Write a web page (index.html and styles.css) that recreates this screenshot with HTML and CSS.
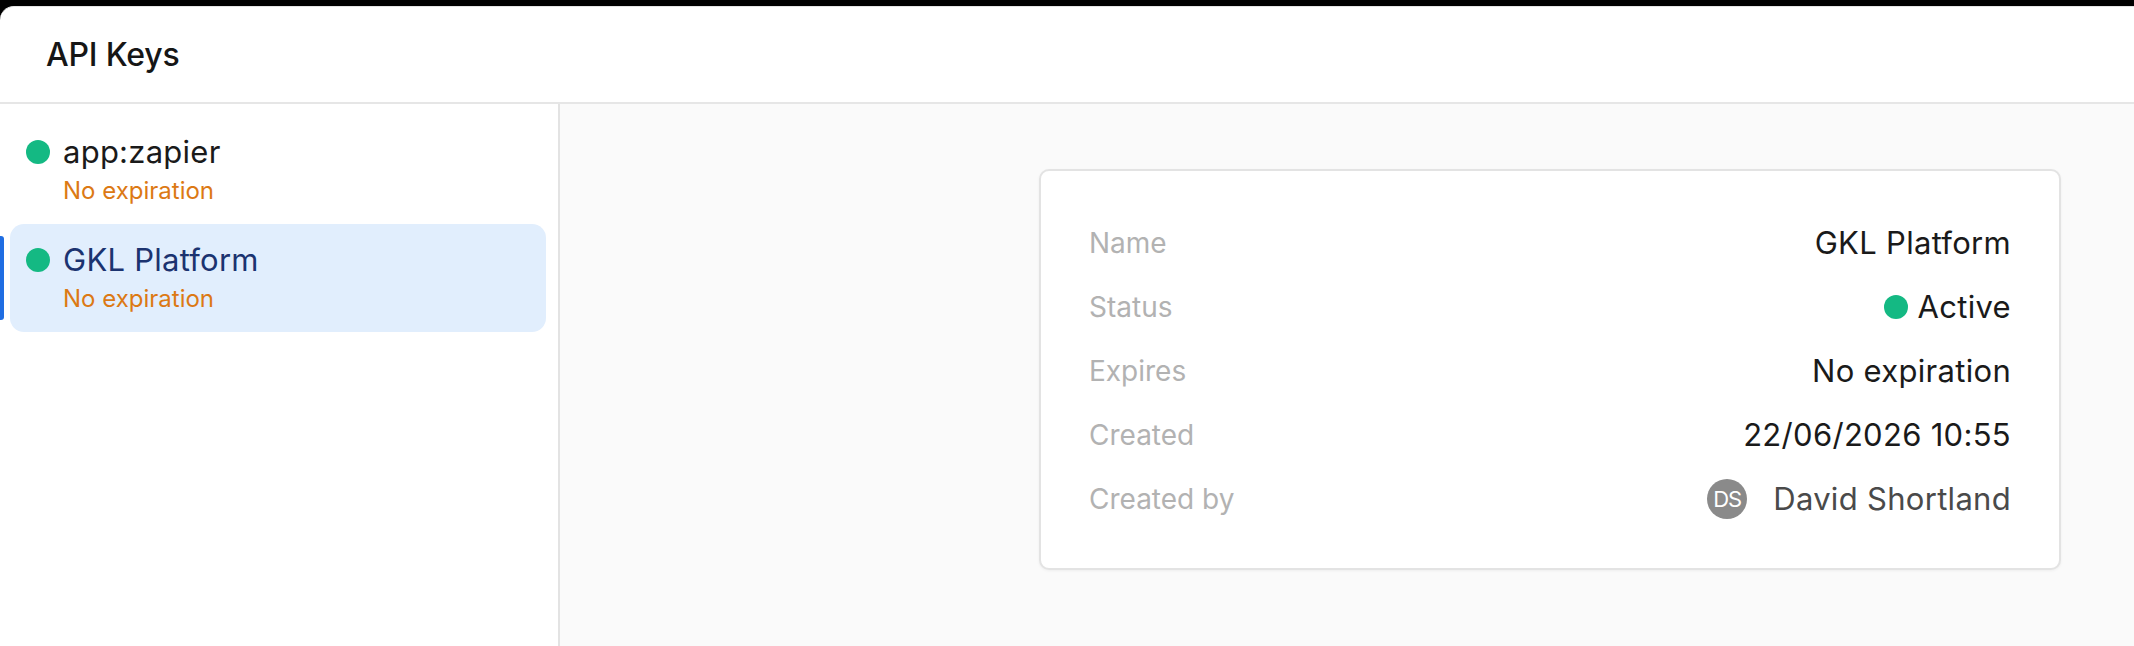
FILE: index.html
```html
<!DOCTYPE html>
<html lang="en">
<head>
<meta charset="utf-8">
<title>API Keys</title>
<link rel="stylesheet" href="styles.css">
</head>
<body>
<div class="window">
  <header class="header">
    <h1 class="title">API Keys</h1>
  </header>
  <div class="content">
    <aside class="sidebar">
      <div class="key-item">
        <div class="key-row">
          <span class="dot"></span>
          <span class="key-name">app:zapier</span>
        </div>
        <div class="key-exp">No expiration</div>
      </div>
      <div class="key-item selected">
        <span class="indicator"></span>
        <div class="key-row">
          <span class="dot"></span>
          <span class="key-name">GKL Platform</span>
        </div>
        <div class="key-exp">No expiration</div>
      </div>
    </aside>
    <main class="main">
      <section class="card">
        <div class="row">
          <span class="label">Name</span>
          <span class="value">GKL Platform</span>
        </div>
        <div class="row">
          <span class="label">Status</span>
          <span class="value status"><span class="dot"></span>Active</span>
        </div>
        <div class="row">
          <span class="label">Expires</span>
          <span class="value">No expiration</span>
        </div>
        <div class="row">
          <span class="label">Created</span>
          <span class="value">22/06/2026 10:55</span>
        </div>
        <div class="row">
          <span class="label">Created by</span>
          <span class="value user"><span class="avatar">DS</span><span class="user-name">David Shortland</span></span>
        </div>
      </section>
    </main>
  </div>
</div>
</body>
</html>
```
FILE: styles.css
```css
* { box-sizing: border-box; }

html, body {
  margin: 0;
  padding: 0;
  background: #000;
  height: 646px;
  overflow: hidden;
}

body {
  font-family: Inter, "Noto Sans", "Liberation Sans", sans-serif;
  padding-top: 6px;
}

.window {
  height: 640px;
  background: #fff;
  border-top: 1px solid #e4e4e4;
  border-top-left-radius: 14px;
  display: flex;
  flex-direction: column;
  overflow: hidden;
}

.header {
  height: 97px;
  flex: none;
  border-bottom: 2px solid #e6e6e6;
  display: flex;
  align-items: center;
  padding-left: 46px;
}

.title {
  margin: 0;
  font-size: 32px;
  font-weight: 500;
  color: #161616;
  line-height: 40px;
  letter-spacing: -0.2px;
}

.content {
  flex: 1;
  display: flex;
  min-height: 0;
}

.sidebar {
  width: 560px;
  flex: none;
  border-right: 2px solid #e3e3e3;
  padding: 12px 12px 0 10px;
  display: flex;
  flex-direction: column;
}

.key-item {
  position: relative;
  height: 108px;
  padding: 16px 16px 0 16px;
  border-radius: 14px;
}

.key-item.selected {
  background: #e1eefd;
}

.indicator {
  position: absolute;
  left: -10px;
  top: 12px;
  bottom: 12px;
  width: 4px;
  background: #1f6de2;
  border-radius: 0 3px 3px 0;
}

.key-row {
  display: flex;
  align-items: center;
  gap: 13px;
  height: 40px;
}

.dot {
  width: 24px;
  height: 24px;
  border-radius: 50%;
  background: #14b983;
  flex: none;
}

.key-name {
  font-size: 31px;
  line-height: 40px;
  letter-spacing: 0.25px;
  color: #1a1a1a;
}

.selected .key-name {
  color: #1b3370;
}

.key-exp {
  margin-top: 3px;
  padding-left: 37px;
  font-size: 24px;
  line-height: 32px;
  color: #dc7914;
}

.main {
  flex: 1;
  background: #fafafa;
  padding: 65px 0 0 479px;
}

.card {
  width: 1022px;
  background: #fff;
  border: 2px solid #e3e3e3;
  border-radius: 10px;
  box-shadow: 0 1px 3px rgba(0, 0, 0, 0.05);
  padding: 52px 48px 49px 48px;
  display: flex;
  flex-direction: column;
  gap: 24px;
}

.row {
  display: flex;
  justify-content: space-between;
  align-items: center;
  height: 40px;
}

.label {
  font-size: 28px;
  line-height: 40px;
  color: #b2b2b2;
}

.value {
  font-size: 31px;
  line-height: 40px;
  letter-spacing: 0.3px;
  color: #1a1a1a;
}

.status {
  display: flex;
  align-items: center;
  gap: 10px;
}

.user {
  display: flex;
  align-items: center;
  gap: 26px;
}

.avatar {
  width: 40px;
  height: 40px;
  border-radius: 50%;
  background: #8a8a8a;
  color: #fff;
  font-size: 22px;
  line-height: 40px;
  text-align: center;
  letter-spacing: -1px;
}

.user-name {
  color: #4a4a4a;
}
```
